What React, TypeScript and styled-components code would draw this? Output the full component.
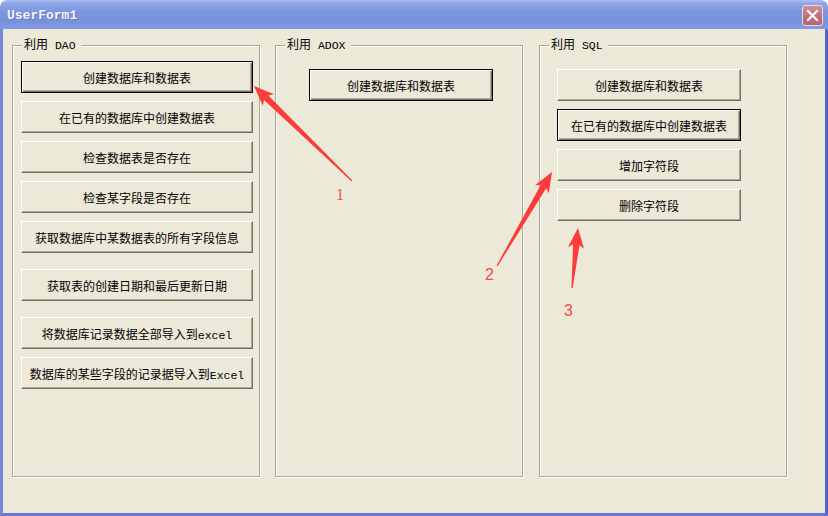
import React from "react";
import styled, { createGlobalStyle, css } from "styled-components";

const GlobalStyle = createGlobalStyle`
  html, body {
    margin: 0;
    padding: 0;
    background: #ffffff;
  }
  body {
    font-family: "Noto Sans CJK SC", "Liberation Sans", sans-serif;
  }
`;

const Window = styled.div`
  position: relative;
  width: 828px;
  height: 516px;
  display: flex;
  flex-direction: column;
  overflow: hidden;
`;

const TitleBar = styled.div`
  height: 29px;
  flex: none;
  display: flex;
  align-items: flex-start;
  justify-content: space-between;
  padding: 5px 5px 0 7px;
  box-sizing: border-box;
  border-radius: 7px 7px 0 0;
  background: linear-gradient(
    to bottom,
    #adc0f1 0%,
    #8ea6e8 12%,
    #7b95df 40%,
    #7891dc 75%,
    #849be1 100%
  );
`;

const Caption = styled.span`
  margin-top: 3px;
  font: bold 13px "Liberation Mono", monospace;
  color: #f2f5ff;
  text-shadow: 1px 1px 0 #6579c4;
`;

const CloseButton = styled.div`
  width: 21px;
  height: 21px;
  box-sizing: border-box;
  border: 1px solid #eed8dc;
  border-radius: 3px;
  background: linear-gradient(to bottom, #d28f99, #bf6c79 60%, #b86474);
  display: flex;
  align-items: center;
  justify-content: center;
`;

const Client = styled.div`
  flex: 1;
  display: flex;
  gap: 15px;
  align-items: flex-start;
  padding: 8px 0 0 9px;
  background: #ece9d8;
  border-left: 3px solid #7587dc;
  border-right: 3px solid #5a60c9;
  border-bottom: 3px solid #6a75d6;
`;

const Frame = styled.fieldset`
  width: 248px;
  height: 440px;
  box-sizing: border-box;
  margin: 0;
  padding: 0;
  border: 1px solid #aca899;
  box-shadow: inset 1px 1px 0 #ffffff, 1px 1px 0 #ffffff;
  &:last-child {
    margin-left: 1px;
  }
`;

const Legend = styled.legend`
  margin-left: 9px;
  padding: 0 5px 0 2px;
  line-height: 14px;
  font-size: 12px;
  color: #000;
  background: #ece9d8;
`;

const Stack = styled.div<{ $top: number; $left: number }>`
  display: flex;
  flex-direction: column;
  align-items: flex-start;
  padding: ${(p) => p.$top}px 0 0 ${(p) => p.$left}px;
`;

const Button = styled.button<{ $width: number; $default?: boolean; $space?: number }>`
  width: ${(p) => p.$width}px;
  height: 32px;
  margin-top: ${(p) => p.$space ?? 8}px;
  box-sizing: border-box;
  padding: 0;
  background: #ece9d8;
  color: #000;
  font: 12px "Noto Sans CJK SC", sans-serif;
  border: 1px solid;
  border-color: #ffffff #716f64 #716f64 #ffffff;
  box-shadow: inset -1px -1px 0 #aca899;
  cursor: default;
  &:first-child {
    margin-top: 0;
  }
  ${(p) =>
    p.$default &&
    css`
      border-color: #000;
      box-shadow: inset 1px 1px 0 #ffffff, inset -1px -1px 0 #716f64,
        inset -2px -2px 0 #aca899;
    `}
`;

const Latin = styled.span`
  font-family: "Liberation Mono", monospace;
  font-size: 11.5px;
`;

const Overlay = styled.svg`
  position: absolute;
  left: 0;
  top: 0;
  pointer-events: none;
`;

const Label: React.FC<{ text: string }> = ({ text }) => (
  <>
    {text
      .split(/([A-Za-z0-9 ]+)/)
      .map((s, i) => (/[A-Za-z]/.test(s) ? <Latin key={i}>{s}</Latin> : s))}
  </>
);

type Item = { text: string; def?: boolean; space?: number };

const daoItems: Item[] = [
  { text: "创建数据库和数据表", def: true },
  { text: "在已有的数据库中创建数据表" },
  { text: "检查数据表是否存在" },
  { text: "检查某字段是否存在" },
  { text: "获取数据库中某数据表的所有字段信息" },
  { text: "获取表的创建日期和最后更新日期", space: 16 },
  { text: "将数据库记录数据全部导入到excel", space: 16 },
  { text: "数据库的某些字段的记录据导入到Excel" },
];

const sqlItems: Item[] = [
  { text: "创建数据库和数据表" },
  { text: "在已有的数据库中创建数据表", def: true },
  { text: "增加字符段" },
  { text: "删除字符段" },
];

type Pt = [number, number];

// tapered callout arrow: wide head at the tip, thin tail
const arrowPoints = (tip: Pt, tail: Pt) => {
  const dx = tip[0] - tail[0];
  const dy = tip[1] - tail[1];
  const len = Math.hypot(dx, dy);
  const u: Pt = [dx / len, dy / len];
  const n: Pt = [-u[1], u[0]];
  const headLen = 20;
  const base: Pt = [tip[0] - u[0] * headLen, tip[1] - u[1] * headLen];
  const neck: Pt = [base[0] + u[0] * 3, base[1] + u[1] * 3];
  const at = (p: Pt, k: number): string =>
    `${(p[0] + n[0] * k).toFixed(1)},${(p[1] + n[1] * k).toFixed(1)}`;
  return [
    `${tip[0]},${tip[1]}`,
    at(base, 8),
    at(neck, 3.2),
    at(tail, 0.6),
    at(tail, -0.6),
    at(neck, -3.2),
    at(base, -8),
  ].join(" ");
};

const arrows: { tip: Pt; tail: Pt; label: string; at: Pt; serif?: boolean }[] = [
  { tip: [254, 86], tail: [352, 181], label: "1", at: [336, 200], serif: true },
  { tip: [552, 172], tail: [497, 266], label: "2", at: [485, 280] },
  { tip: [578, 228], tail: [572, 288], label: "3", at: [564, 316] },
];

export default function App() {
  return (
    <Window>
      <GlobalStyle />
      <TitleBar>
        <Caption>UserForm1</Caption>
        <CloseButton>
          <svg width="13" height="13" viewBox="0 0 13 13">
            <path d="M2 2 L11 11 M11 2 L2 11" stroke="#fff" strokeWidth="2.2" strokeLinecap="square" />
          </svg>
        </CloseButton>
      </TitleBar>
      <Client>
        <Frame>
          <Legend>
            <Label text="利用 DAO" />
          </Legend>
          <Stack $top={8} $left={8}>
            {daoItems.map((it) => (
              <Button key={it.text} $width={232} $default={it.def} $space={it.space}>
                <Label text={it.text} />
              </Button>
            ))}
          </Stack>
        </Frame>
        <Frame>
          <Legend>
            <Label text="利用 ADOX" />
          </Legend>
          <Stack $top={16} $left={33}>
            <Button $width={184} $default>
              创建数据库和数据表
            </Button>
          </Stack>
        </Frame>
        <Frame>
          <Legend>
            <Label text="利用 SQL" />
          </Legend>
          <Stack $top={16} $left={17}>
            {sqlItems.map((it) => (
              <Button key={it.text} $width={184} $default={it.def}>
                {it.text}
              </Button>
            ))}
          </Stack>
        </Frame>
      </Client>
      <Overlay width="828" height="516" viewBox="0 0 828 516">
        {arrows.map((a) => (
          <g key={a.label}>
            <polygon points={arrowPoints(a.tip, a.tail)} fill="#ff3b3b" />
            <text
              x={a.at[0]}
              y={a.at[1]}
              fill="#ff4848"
              fontSize="16"
              fontFamily={a.serif ? "Liberation Serif, serif" : "Liberation Sans, sans-serif"}
            >
              {a.label}
            </text>
          </g>
        ))}
      </Overlay>
    </Window>
  );
}
